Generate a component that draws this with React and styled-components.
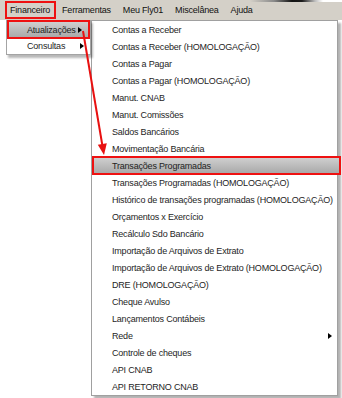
import styled, { createGlobalStyle } from "styled-components";

const GlobalStyle = createGlobalStyle`
  html, body {
    margin: 0;
    padding: 0;
    background: #ffffff;
  }
  body {
    font-family: "Liberation Sans", Arial, sans-serif;
    font-size: 9px;
    letter-spacing: -0.2px;
    color: #1e1e1e;
  }
`;

const Page = styled.div`
  position: relative;
  width: 342px;
  height: 398px;
  overflow: hidden;
  background: #ffffff;
`;

const MenuBar = styled.div`
  display: flex;
  align-items: center;
  height: 20px;
  padding-left: 5px;
  box-sizing: border-box;
  background-color: #d4d0c8;
  background-image: linear-gradient(
    to right,
    #d4d0c8 0,
    #d4d0c8 250px,
    #8a8a8a 274px,
    #141414 292px,
    #1c1c1c 302px,
    #bdbdbd 315px,
    #ffffff 323px,
    #ffffff 100%
  );
  background-size: 100% 2px;
  background-repeat: no-repeat;
  background-position: top left;
`;

const BarItem = styled.div`
  height: 18px;
  line-height: ${(p) => (p.active ? "14px" : "18px")};
  box-sizing: border-box;
  padding: ${(p) => (p.active ? "0 4px 0 3px" : "0 6px")};
  border: ${(p) => (p.active ? "2px solid #ee1111" : "none")};
  color: #111;
  white-space: nowrap;
`;

const Panels = styled.div`
  display: flex;
  align-items: flex-start;
  padding-left: 6px;
`;

const SubMenu = styled.div`
  width: 85px;
  box-sizing: border-box;
  background: #ffffff;
  border: 1px solid #a4a4a4;
  box-shadow: 2px 3px 2px rgba(0, 0, 0, 0.28);
  position: relative;
`;

const DropDown = styled.div`
  width: 247px;
  box-sizing: border-box;
  background: #ffffff;
  border: 1px solid #a0a0a0;
  box-shadow: 3px 3px 2px rgba(0, 0, 0, 0.3);
`;

const Row = styled.div`
  display: flex;
  align-items: center;
  justify-content: space-between;
  height: ${(p) => (p.selected ? p.h + 2 : p.h)}px;
  margin: ${(p) => (p.selected ? `-1px ${p.stretch}px -1px 0` : "0")};
  position: relative;
  box-sizing: border-box;
  padding: 0 ${(p) => p.right}px 0 ${(p) => (p.selected ? 18 : 20)}px;
  border: ${(p) => (p.selected ? "2px solid #ee1111" : "none")};
  background: ${(p) =>
    p.selected ? "linear-gradient(#cfcfcf, #a9a9a9)" : "transparent"};
  white-space: nowrap;
  color: #1e1e1e;
`;

const Caret = styled.span`
  width: 0;
  height: 0;
  border-left: 4px solid #000;
  border-top: 3.5px solid transparent;
  border-bottom: 3.5px solid transparent;
`;

const Pointer = styled.svg`
  position: absolute;
  left: 0;
  top: 0;
  pointer-events: none;
`;

const barItems = ["Financeiro", "Ferramentas", "Meu Fly01", "Miscelânea", "Ajuda"];

const subItems = [
  { label: "Atualizações", selected: true, h: 17 },
  { label: "Consultas", h: 16 },
];

const items = [
  "Contas a Receber",
  "Contas a Receber (HOMOLOGAÇÃO)",
  "Contas a Pagar",
  "Contas a Pagar (HOMOLOGAÇÃO)",
  "Manut. CNAB",
  "Manut. Comissões",
  "Saldos Bancários",
  "Movimentação Bancária",
  "Transações Programadas",
  "Transações Programadas (HOMOLOGAÇÃO)",
  "Histórico de transações programadas (HOMOLOGAÇÃO)",
  "Orçamentos x Exercício",
  "Recálculo Sdo Bancário",
  "Importação de Arquivos de Extrato",
  "Importação de Arquivos de Extrato (HOMOLOGAÇÃO)",
  "DRE (HOMOLOGAÇÃO)",
  "Cheque Avulso",
  "Lançamentos Contábeis",
  "Rede",
  "Controle de cheques",
  "API CNAB",
  "API RETORNO CNAB",
];

const selectedItem = "Transações Programadas";
const withSubmenu = ["Rede"];

export default function App() {
  return (
    <Page>
      <GlobalStyle />
      <MenuBar>
        {barItems.map((label, i) => (
          <BarItem key={label} active={i === 0}>
            {label}
          </BarItem>
        ))}
      </MenuBar>
      <Panels>
        <SubMenu>
          {subItems.map((s) => (
            <Row key={s.label} h={s.h} right={6} stretch={0} selected={s.selected}>
              <span>{s.label}</span>
              <Caret />
            </Row>
          ))}
        </SubMenu>
        <DropDown>
          {items.map((label) => (
            <Row
              key={label}
              h={17}
              right={5}
              stretch={-4}
              selected={label === selectedItem}
            >
              <span>{label}</span>
              {withSubmenu.includes(label) && <Caret />}
            </Row>
          ))}
        </DropDown>
      </Panels>
      {/* red annotation arrow from Atualizações down to the selected entry */}
      <Pointer width="342" height="398" viewBox="0 0 342 398">
        <line x1="83" y1="31" x2="102.3" y2="145" stroke="#e81010" strokeWidth="2" />
        <polygon points="104,155 106.8,143.3 97.8,144.7" fill="#e81010" />
      </Pointer>
    </Page>
  );
}
